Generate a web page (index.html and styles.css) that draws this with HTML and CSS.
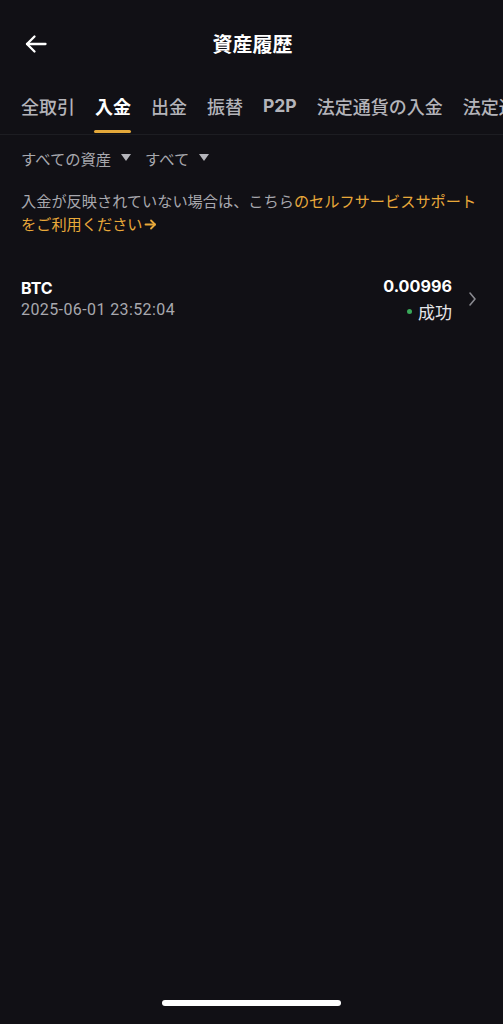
FILE: index.html
```html
<!DOCTYPE html>
<html lang="ja">
<head>
<meta charset="utf-8">
<link rel="stylesheet" href="styles.css">
</head>
<body>
<div class="screen">
  <header class="header">
    <button class="back" aria-label="戻る">
      <svg width="24" height="24" viewBox="0 0 24 24" fill="none" stroke="#fff" stroke-width="2.3" stroke-linecap="round" stroke-linejoin="round"><path d="M21.5 12H3"/><path d="M10.5 4.5L3 12L10.5 19.5"/></svg>
    </button>
    <h1 class="title">資産履歴</h1>
  </header>
  <nav class="tabs">
    <span class="tab">全取引</span>
    <span class="tab active">入金</span>
    <span class="tab">出金</span>
    <span class="tab">振替</span>
    <span class="tab">P2P</span>
    <span class="tab">法定通貨の入金</span>
    <span class="tab">法定通貨の出金</span>
  </nav>
  <div class="filters">
    <span class="filter">すべての資産<span class="tri"></span></span>
    <span class="filter">すべて<span class="tri"></span></span>
  </div>
  <p class="notice">入金が反映されていない場合は、こちら<span class="link">のセルフサービスサポート<br>をご利用ください<svg class="arr" width="13" height="13" viewBox="0 0 13 13" fill="none" stroke="#e9a93a" stroke-width="1.8" stroke-linecap="round" stroke-linejoin="round"><path d="M1.5 6.5h9.5"/><path d="M7 2.5l4 4-4 4"/></svg></span></p>
  <div class="record">
    <div class="rec-left">
      <div class="coin">BTC</div>
      <div class="date">2025-06-01 23:52:04</div>
    </div>
    <div class="rec-right">
      <div class="amount">0.00996</div>
      <div class="status"><span class="dot"></span>成功</div>
    </div>
    <svg class="chev" width="10" height="16" viewBox="0 0 10 16" fill="none" stroke="#8a8a90" stroke-width="1.6" stroke-linecap="round" stroke-linejoin="round"><path d="M3 2l5 6-5 6"/></svg>
  </div>
  <div class="spacer"></div>
  <div class="home-bar"><span></span></div>
</div>
</body>
</html>
```
FILE: styles.css
```css
* { box-sizing: border-box; }
html, body { margin: 0; padding: 0; background: #111015; }
body {
  font-family: "Noto Sans CJK JP", "Noto Sans", sans-serif;
  color: #fff;
  width: 503px;
  height: 1024px;
  overflow: hidden;
}
.screen {
  height: 1024px;
  display: flex;
  flex-direction: column;
}
.header {
  height: 88px;
  position: relative;
  display: flex;
  align-items: center;
  justify-content: center;
}
.back {
  position: absolute;
  left: 24px;
  top: 32px;
  background: none;
  border: 0;
  padding: 0;
  width: 26px;
  height: 24px;
  display: flex;
}
.title {
  margin: 0 0 0 2px;
  font-size: 20px;
  font-weight: 700;
  line-height: 24px;
}
.tabs {
  display: flex;
  gap: 20px;
  padding: 0 0 0 21px;
  height: 47px;
  border-bottom: 1px solid #1d1d22;
  white-space: nowrap;
  overflow: hidden;
}
.tab {
  font-size: 18px;
  font-weight: 500;
  color: #b4b4ba;
  line-height: 24px;
  padding-top: 6px;
  position: relative;
  flex: none;
}
.tab:nth-child(5) { font-family: Inter, "Noto Sans CJK JP", sans-serif; font-weight: 700; font-size: 17.5px; }
.tab.active {
  color: #fff;
  font-weight: 700;
}
.tab.active::after {
  content: "";
  position: absolute;
  left: -1px;
  right: 0;
  top: 42px;
  height: 3px;
  border-radius: 2px;
  background: #e4a83a;
}
.filters {
  display: flex;
  gap: 14px;
  padding: 11px 21px 0;
  height: 34px;
}
.filter {
  display: flex;
  align-items: center;
  gap: 10px;
  font-size: 15.3px;
  color: #a8a8ae;
  line-height: 20px;
}
.tri {
  width: 0;
  height: 0;
  border-left: 5px solid transparent;
  border-right: 5px solid transparent;
  border-top: 7px solid #b4b4ba;
}
.notice {
  margin: 0;
  padding: 20px 21px 0;
  font-size: 15.2px;
  line-height: 23px;
  color: #a8a8ae;
  height: 96px;
  white-space: nowrap;
}
.link { color: #e9a93a; }
.arr { vertical-align: -1px; margin-left: 1px; }
.record {
  display: flex;
  align-items: center;
  padding: 0 26px 0 21px;
  height: 68px;
}
.rec-left { flex: 1; }
.coin {
  font-family: Inter, sans-serif;
  font-size: 16px;
  font-weight: 700;
  line-height: 22px;
}
.date {
  font-family: Roboto, sans-serif;
  font-size: 16px;
  letter-spacing: 0.4px;
  color: #a8a8ae;
  line-height: 22px;
}
.rec-right {
  display: flex;
  flex-direction: column;
  align-items: flex-end;
}
.amount {
  font-family: Inter, sans-serif;
  font-size: 16.2px;
  font-weight: 700;
  line-height: 22px;
}
.status {
  font-size: 17px;
  line-height: 24px;
  margin-top: 3px;
  display: flex;
  align-items: center;
  gap: 6px;
  color: #e6e6ea;
}
.dot {
  width: 5px;
  height: 5px;
  border-radius: 50%;
  background: #3aa95a;
}
.chev { margin-left: 15px; }
.spacer { flex: 1; }
.home-bar {
  height: 24px;
  display: flex;
  justify-content: center;
}
.home-bar span {
  width: 179px;
  height: 6px;
  border-radius: 3px;
  background: #fff;
}
```
